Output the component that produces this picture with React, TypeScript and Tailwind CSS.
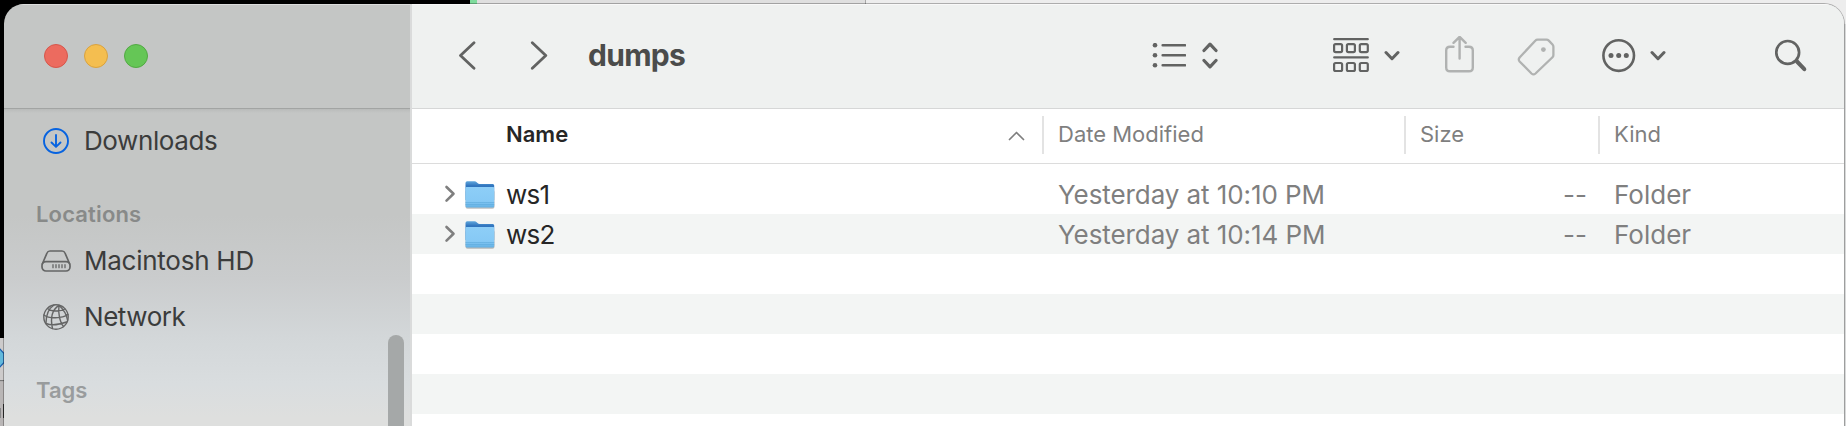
import React from "react";

const stroke = { fill: "none", strokeLinecap: "round", strokeLinejoin: "round" } as const;

function Backdrop() {
  return (
    <div className="absolute inset-0 flex flex-col bg-[#d8d9d9]">
      <div className="flex h-[24px]">
        <div className="w-[470px] bg-black" />
        <div className="w-[7px] bg-[#7fdc9d]" />
        <div className="w-[388px] bg-[#dfdfdf]" />
        <div className="w-px bg-[#a8a8a8]" />
        <div className="flex-1 bg-[#ededed]" />
      </div>
      <div className="h-[314px] w-[40px] bg-black" />
      <svg className="h-[88px] w-[4px] shrink-0" viewBox="0 338 4 88">
        <rect x="0" y="338" width="4" height="43" fill="#cdcbcb" />
        <path d="M-2 347L4 353.500V362.500L-2 369Z" fill="#62b9dc" stroke="#1b5fae" strokeWidth="1.200" />
        <rect x="0" y="380" width="4" height="1.500" fill="#777" />
        <rect x="0" y="381.500" width="4" height="45" fill="#b9b6b6" />
        <rect x="3" y="404" width="1" height="14" fill="#333" />
        <rect x="0" y="408" width="1" height="10" fill="#888" />
      </svg>
    </div>
  );
}

function SidebarItem({ icon, label, spacing }: { icon: React.ReactNode; label: string; spacing: string }) {
  return (
    <div className="flex h-[56px] shrink-0 items-center pl-[37px]">
      <div className="flex w-[30px] justify-center">{icon}</div>
      <span className={`ml-[13px] whitespace-nowrap text-[26px] leading-[32px] text-[#3b3c3c] ${spacing}`}>{label}</span>
    </div>
  );
}

function Sidebar() {
  return (
    <aside className="relative flex w-[406px] shrink-0 flex-col bg-[linear-gradient(to_bottom,#c4c6c5_0%,#c4c6c5_50%,#cacccd_65%,#d3d7d9_79%,#d9dddf_90%,#dedfde_98%)]">
      <div className="flex h-[105px] shrink-0 items-center gap-4 border-y border-b-[#a2a4a3] border-t-[#dcdddd] pb-px pl-[40px]">
        <span className="size-6 rounded-full border border-[#d6564b] bg-[#ec6b5f]" />
        <span className="size-6 rounded-full border border-[#d9a23f] bg-[#f4be50]" />
        <span className="size-6 rounded-full border border-[#52a943] bg-[#65c656]" />
      </div>
      <div className="h-[4px] shrink-0 bg-linear-to-b from-[#b9bbba] to-[#c4c6c5]" />
      <SidebarItem
        label="Downloads"
        spacing="tracking-[-0.4px]"
        icon={
          <svg width="26" height="26" viewBox="0 0 26 26" stroke="#0763e0" strokeWidth="1.900" {...stroke}>
            <circle cx="13" cy="13" r="12" />
            <path d="M13 7V18.500M8.500 14.500L13 18.900L17.500 14.500" />
          </svg>
        }
      />
      <div className="mt-[28px] h-[36px] shrink-0 pl-[32px] text-[22px] font-semibold leading-[34px] tracking-[0.15px] text-[#888a89]">Locations</div>
      <SidebarItem
        label="Macintosh HD"
        spacing="tracking-[-0.25px]"
        icon={
          <svg width="30" height="22" viewBox="0 0 30 22" stroke="#646565" strokeWidth="1.700" {...stroke}>
            <path d="M1.300 14L6 3Q6.800 1 9 1H21Q23.200 1 24 3L28.700 14" />
            <rect x="1" y="11.600" width="28" height="9.400" rx="4" />
            <path d="M12 14.700V17.700M15 14.700V17.700M18 14.700V17.700M21 14.700V17.700M24 14.700V17.700" strokeWidth="1.300" />
          </svg>
        }
      />
      <SidebarItem
        label="Network"
        spacing="tracking-[-0.45px]"
        icon={
          <svg width="26" height="26" viewBox="0 0 26 26" stroke="#646565" strokeWidth="1.400" {...stroke}>
            <circle cx="13" cy="13" r="12.200" />
            <path d="M16 1.300C10 5 7 13 9.500 24.500M16 1.300C15 8 16.500 18 20.500 22.500M16 1.300C20 5 23.500 10 24.500 16M4.500 4.500C8 7.500 17 8 22 5M1 11C6 15 19 14.500 25 10.500M3 19.500C9 22 18 20 23.500 18M11 1C5 5 3 10 3 19" />
          </svg>
        }
      />
      <div className="mt-[28px] h-[34px] shrink-0 pl-[32px] text-[22px] font-semibold leading-[34px] text-[#999c9d]">Tags</div>
      <div className="absolute left-[384px] top-[331px] h-[110px] w-4 rounded-full bg-[#a5a8a8]" />
    </aside>
  );
}

function Chevron() {
  return (
    <svg width="16" height="12" viewBox="0 0 16 12" stroke="#626362" strokeWidth="3" {...stroke}>
      <path d="M2 2.500L8 8.700L14 2.500" />
    </svg>
  );
}

function Toolbar() {
  return (
    <header className="flex h-[105px] shrink-0 items-center border-y border-b-[#d6d7d7] border-t-[#f9f9f9] bg-[#eff1f0] pb-px pl-[46px]">
      <svg width="18" height="30" viewBox="458 40.500 18 30" stroke="#626362" strokeWidth="2.800" {...stroke}>
        <path d="M474 42.300L460.500 55L474 67.700" />
      </svg>
      <svg className="ml-[54px]" width="18" height="30" viewBox="530 40.500 18 30" stroke="#626362" strokeWidth="2.800" {...stroke}>
        <path d="M532.300 42.300L545.800 55L532.300 67.700" />
      </svg>
      <h1 className="-mt-[2px] ml-[40px] w-[564px] text-[30px] font-bold leading-[40px] tracking-[-0.7px] text-[#4b4c4b]">dumps</h1>
      <svg width="34" height="26" viewBox="1152 42.500 34 26" stroke="#626362" strokeWidth="2.600" {...stroke}>
        <path d="M1162.700 44.700H1185M1162.700 54.700H1185M1162.700 64.700H1185" />
        <g fill="#626362" stroke="none">
          <circle cx="1155" cy="44.700" r="2.300" />
          <circle cx="1155" cy="54.700" r="2.300" />
          <circle cx="1155" cy="64.700" r="2.300" />
        </g>
      </svg>
      <svg className="ml-[16px]" width="16" height="28" viewBox="1202 42.500 16 28" stroke="#626362" strokeWidth="3.200" {...stroke}>
        <path d="M1204 51L1210 44.600L1216 51M1204 61L1210 67.400L1216 61" />
      </svg>
      <svg className="ml-[115px]" width="36" height="36" viewBox="1333 38 36 36" stroke="#626362" strokeWidth="2.200" {...stroke}>
        <path d="M1334.200 39.200H1367.800M1334.200 57.400H1367.800" />
        <rect x="1334.100" y="44.100" width="8" height="8" rx="1.500" />
        <rect x="1346.900" y="44.100" width="8" height="8" rx="1.500" />
        <rect x="1359.800" y="44.100" width="8" height="8" rx="1.500" />
        <rect x="1334.100" y="63" width="8" height="8" rx="1.500" />
        <rect x="1346.900" y="63" width="8" height="8" rx="1.500" />
        <rect x="1359.800" y="63" width="8" height="8" rx="1.500" />
      </svg>
      <div className="ml-[15px]"><Chevron /></div>
      <svg className="ml-[44px]" width="31" height="40" viewBox="1444 35.500 31 40" stroke="#b0b2b1" strokeWidth="2.400" {...stroke}>
        <path d="M1453.500 46.200H1450Q1446.200 46.200 1446.200 50V67Q1446.200 70.800 1450 70.800H1469Q1472.800 70.800 1472.800 67V50Q1472.800 46.200 1469 46.200H1465.500" />
        <path d="M1459.600 58V37M1453.500 42.300L1459.600 36.300L1465.700 42.300" />
      </svg>
      <svg className="ml-[42px]" width="39" height="39" viewBox="1517 36 39 39" stroke="#b0b2b1" strokeWidth="2.300" {...stroke}>
        <path d="M1537.500 38.600H1546.500Q1547.800 38.600 1548.800 39.600L1552.500 43.500Q1553.400 44.500 1553.400 45.800V54Q1553.400 55.300 1552.500 56.200L1535.500 72.500Q1533.500 74.300 1531.500 72.500L1519.600 60.500Q1518 58.500 1519.600 56.500L1535.500 39.500Q1536.300 38.600 1537.500 38.600Z" />
        <circle cx="1543.400" cy="48.600" r="2.400" fill="#b0b2b1" stroke="none" />
      </svg>
      <svg className="ml-[46px]" width="34" height="34" viewBox="1602 39 34 34" stroke="#626362" strokeWidth="2.600" {...stroke}>
        <circle cx="1618.700" cy="55.600" r="15.300" />
        <g fill="#626362" stroke="none">
          <circle cx="1611" cy="55.500" r="2.500" />
          <circle cx="1618.700" cy="55.500" r="2.500" />
          <circle cx="1626.300" cy="55.500" r="2.500" />
        </g>
      </svg>
      <div className="ml-[14px]"><Chevron /></div>
      <svg className="ml-[108px]" width="34" height="34" viewBox="1774 39 34 34" stroke="#626362" strokeWidth="2.700" {...stroke}>
        <circle cx="1787.700" cy="52.400" r="11.400" />
        <path d="M1797 61.500L1804.300 69.200" strokeWidth="4" />
      </svg>
    </header>
  );
}

function Folder() {
  return (
    <svg className="ml-[8px] mt-[2px]" width="32" height="30" viewBox="0 0 32 30">
      <defs>
        <linearGradient id="back" x1="0" y1="0" x2="0" y2="1">
          <stop offset="0" stopColor="#5fa6dc" />
          <stop offset=".25" stopColor="#2f73bd" />
          <stop offset="1" stopColor="#4f9bd6" />
        </linearGradient>
        <linearGradient id="front" x1="0" y1="0" x2="0" y2="1">
          <stop offset="0" stopColor="#8dcef7" />
          <stop offset=".7" stopColor="#86c9f5" />
          <stop offset="1" stopColor="#62b0e3" />
        </linearGradient>
      </defs>
      <rect x="1.500" y="10" width="29" height="18.800" rx="2" fill="#000" opacity=".25" />
      <path d="M1.500 3Q1.500 1.300 3.200 1.300H10.500Q11.800 1.300 12.700 2.200L13.500 3Q14.400 4 15.700 4H28.800Q30.200 4 30.200 5.500V20H1.500Z" fill="url(#back)" />
      <path d="M1.500 8Q1.500 7 2.500 7H29.200Q30.200 7 30.200 8V26Q30.200 27.500 28.700 27.500H3Q1.500 27.500 1.500 26Z" fill="url(#front)" />
      <path d="M1.500 22.500H30.200M1.500 24.500H30.200" stroke="#5da9dc" strokeWidth=".6" />
    </svg>
  );
}

function Row({ name, date }: { name: string; date: string }) {
  return (
    <div className="flex h-[40px] items-center whitespace-nowrap text-[26px] leading-[38px] text-[#7f7f7f] even:bg-[#f3f5f4]">
      <svg className="ml-[32px]" width="12" height="18" viewBox="444 184.500 12 18" stroke="#7f7f7f" strokeWidth="2.600" {...stroke}>
        <path d="M446.500 186.500L453.500 193.300L446.500 200.100" />
      </svg>
      <Folder />
      <span className="ml-[10px] w-[552px] pt-[2px] tracking-[-0.7px] text-[#262626]">{name}</span>
      <span className="w-[440px] pt-[2px] tracking-[-0.08px]">{date}</span>
      <span className="w-[89px] pt-[2px] text-right">--</span>
      <span className="ml-[27px] pt-[2px]">Folder</span>
    </div>
  );
}

function FileList() {
  return (
    <main className="flex flex-1 flex-col bg-white">
      <div className="flex h-[55px] shrink-0 items-center border-b border-[#dcdcdc] text-[22px] leading-[36px] text-[#7f7f7f]">
        <div className="flex h-[40px] w-[630px] justify-between pl-[94px] pr-[16px]">
          <span className="font-semibold text-[#262626]">Name</span>
          <svg className="mt-[14px]" width="18" height="12" viewBox="1008 130 18 12" stroke="#7f7f7f" strokeWidth="1.700" {...stroke}>
            <path d="M1009.500 139.500L1016.500 132.500L1023.500 139.500" />
          </svg>
        </div>
        <div className="mb-[2px] h-[38px] w-[362px] border-l-2 border-[#e3e3e3] pl-[14px]">Date Modified</div>
        <div className="mb-[2px] h-[38px] w-[194px] border-l-2 border-[#e3e3e3] pl-[14px]">Size</div>
        <div className="mb-[2px] h-[38px] flex-1 border-l-2 border-[#e3e3e3] pl-[14px]">Kind</div>
      </div>
      <div className="mt-[10px]">
        <Row name="ws1" date="Yesterday at 10:10 PM" />
        <Row name="ws2" date="Yesterday at 10:14 PM" />
        {[0, 1, 2, 3, 4].map((i) => (
          <div key={i} className="h-[40px] even:bg-[#f3f5f4]" />
        ))}
      </div>
    </main>
  );
}

export default function App() {
  return (
    <div className="relative h-[426px] w-[1846px] overflow-hidden font-['Inter',sans-serif]">
      <Backdrop />
      <div className="absolute left-[4px] top-[4px] flex h-[422px] w-[1840px] overflow-hidden rounded-t-[20px] shadow-[0_0_0_1px_rgba(0,0,0,0.27)]">
        <Sidebar />
        <div className="w-[2px] shrink-0 bg-[#dadbdb]" />
        <div className="flex min-w-0 flex-1 flex-col">
          <Toolbar />
          <FileList />
        </div>
      </div>
    </div>
  );
}
